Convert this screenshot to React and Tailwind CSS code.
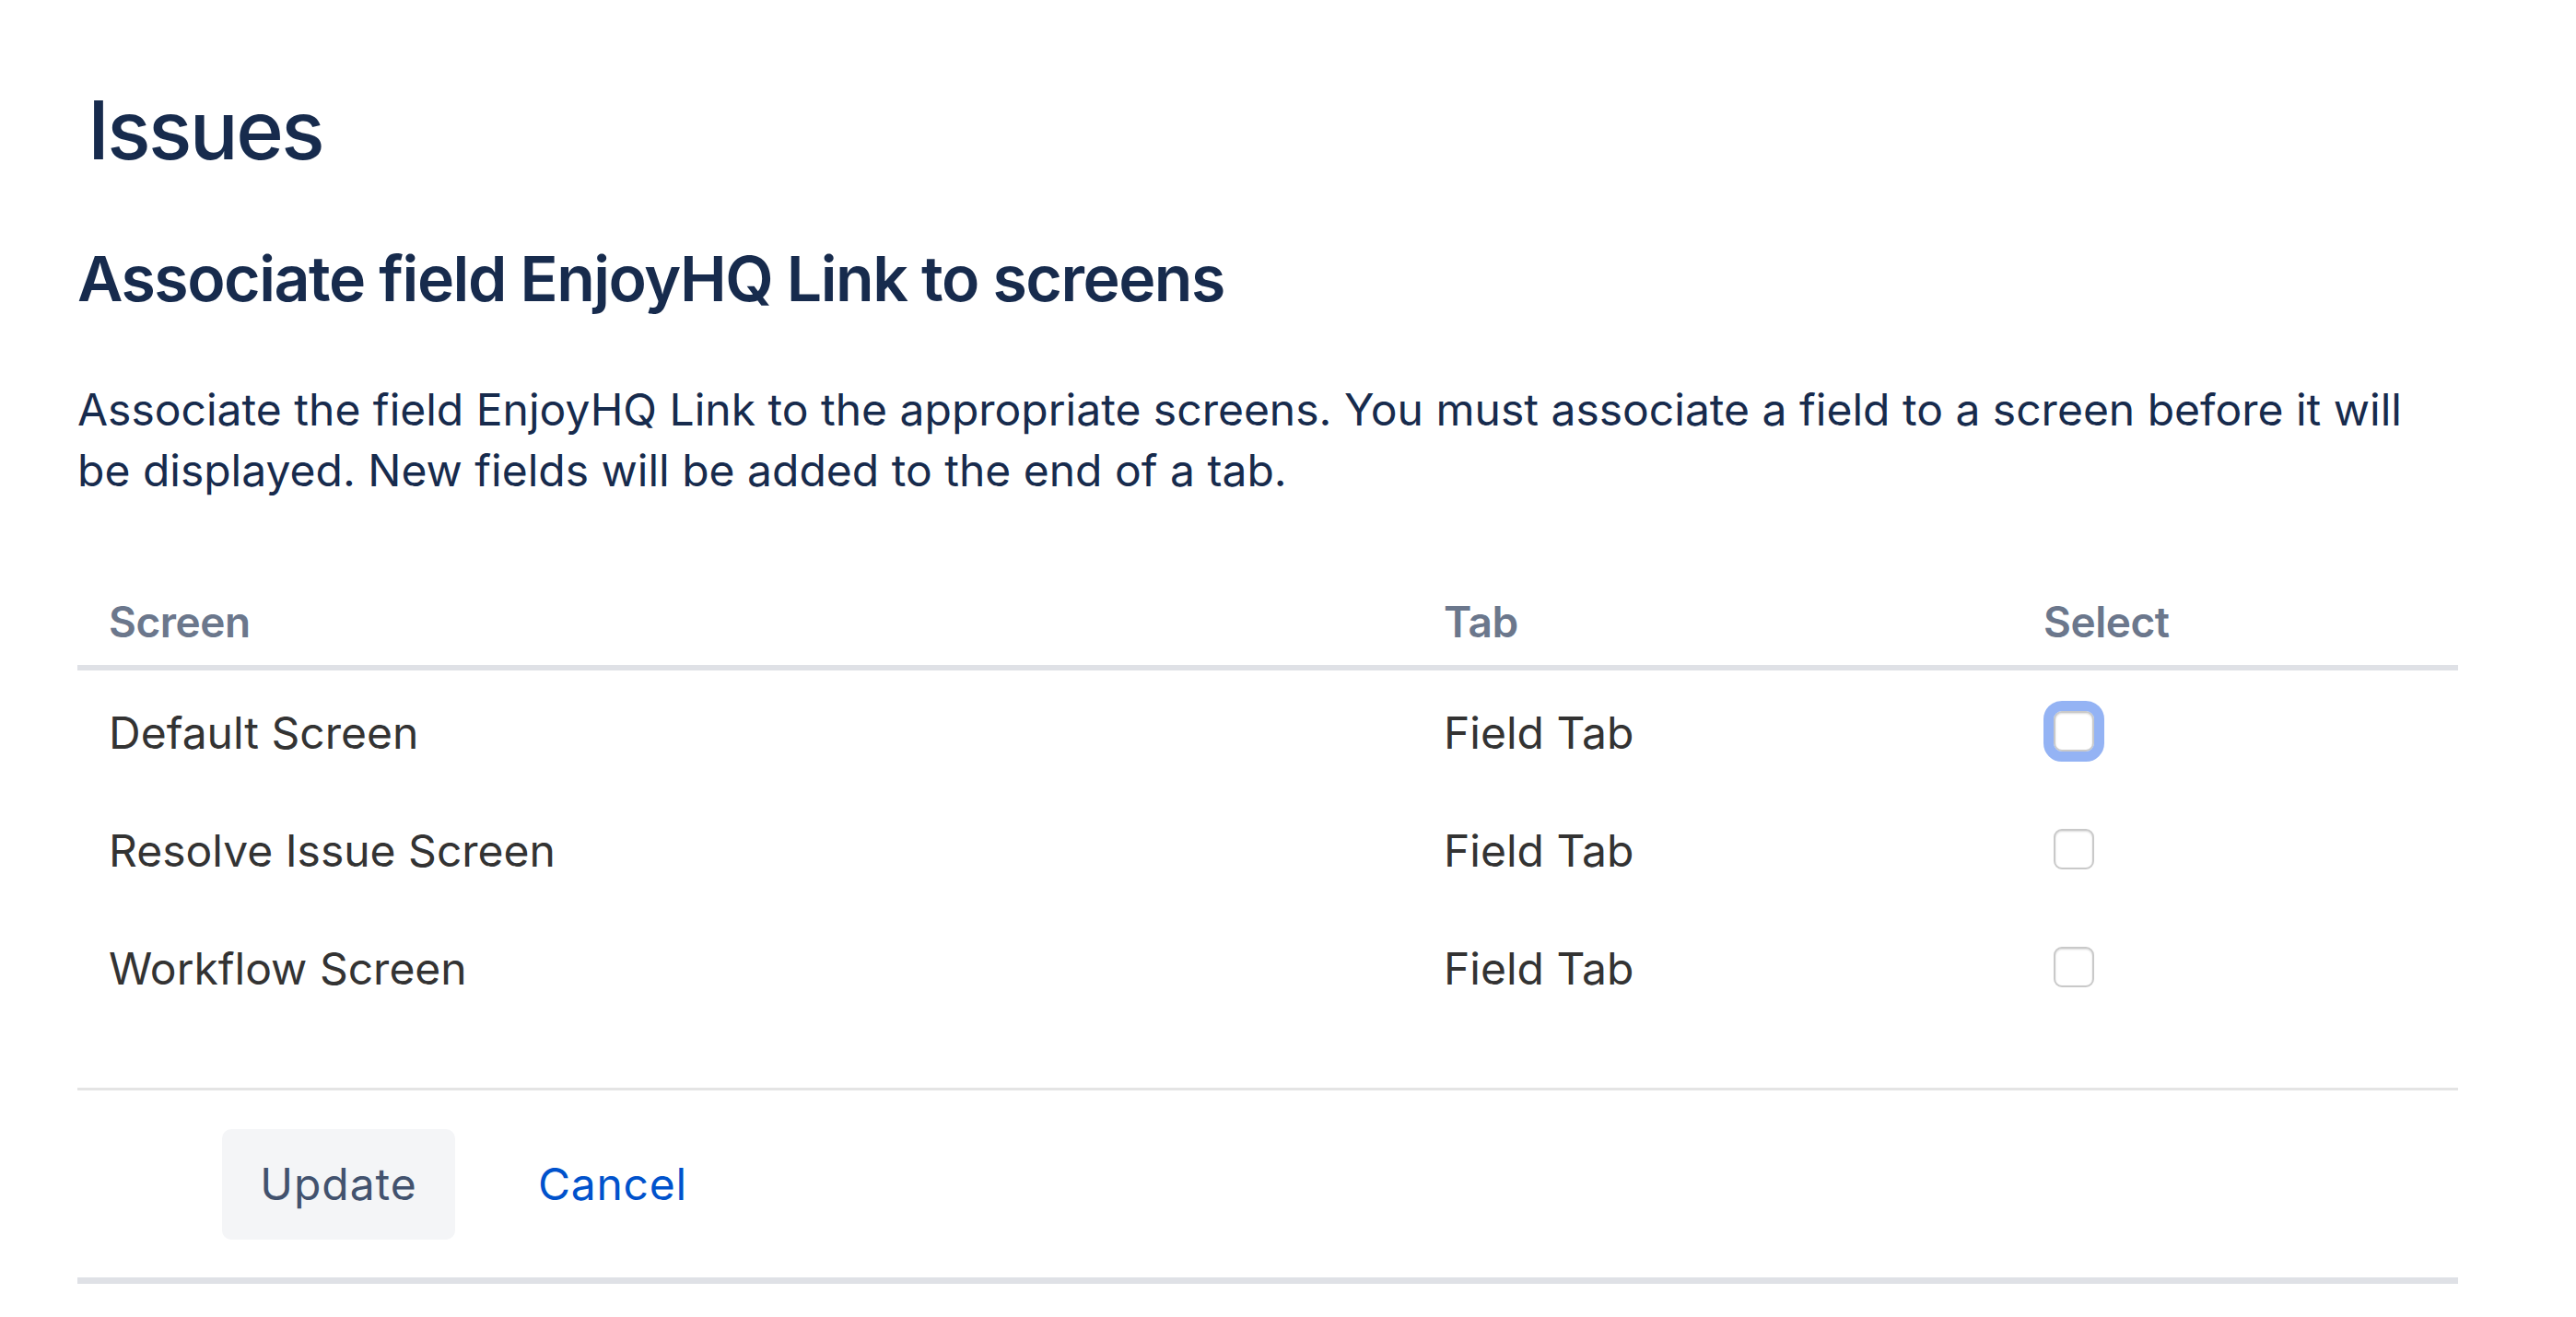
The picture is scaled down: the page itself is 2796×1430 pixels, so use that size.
import React from 'react'

const rows = [
  { id: 1, screen: 'Default Screen', tab: 'Field Tab', focused: true },
  { id: 2, screen: 'Resolve Issue Screen', tab: 'Field Tab', focused: false },
  { id: 3, screen: 'Workflow Screen', tab: 'Field Tab', focused: false },
]

const App = () => {
  return (
    <div className="min-h-[1430px] w-full bg-white font-['Inter','Liberation_Sans',sans-serif] text-[#172B4D]">
      <div className="w-[2668px] pl-[84px]">
        {/* Page header */}
        <h1 className="ml-[11px] pt-[97px] text-[88px] font-medium leading-[88px] tracking-[-0.03em]">Issues</h1>

        {/* Form title + description */}
        <h2 className="mt-[83px] text-[68px] font-semibold leading-[68px] tracking-[-0.022em]">
          Associate field EnjoyHQ Link to screens
        </h2>
        <p className="mt-[76px] text-[48px] leading-[66px]">
          Associate the field EnjoyHQ Link to the appropriate screens. You must associate a field to a screen before it will be displayed. New fields will be added to the end of a tab.
        </p>

        {/* Screens table */}
        <div className="mt-[108px]">
          <div className="grid grid-cols-[1449px_653px_1fr] border-b-[6px] border-[#DFE1E6] pb-[24px] text-[46px] font-semibold leading-[46px] tracking-[-0.01em] text-[#6B778C]">
            <div className="pl-[34px]">Screen</div>
            <div className="pl-[34px]">Tab</div>
            <div className="pl-[32px]">Select</div>
          </div>
          <div className="pt-[4px] pb-[65px]">
            {rows.map((row) => (
              <div
                key={row.id}
                className="grid h-[128px] grid-cols-[1449px_653px_1fr] items-center text-[48px] leading-[48px] text-[#333333]"
              >
                <div className="pl-[34px]">{row.screen}</div>
                <div className="pl-[34px]">{row.tab}</div>
                <div className="flex pl-[43px]">
                  <input
                    type="checkbox"
                    defaultChecked={false}
                    className={`-mt-[4px] h-[44px] w-[44px] appearance-none rounded-[9px] border-[2px] border-[#C9C9C9] bg-white shadow-[inset_0_1px_2px_rgba(0,0,0,0.15)] ${
                      row.focused ? 'outline-[11px] outline-solid outline-[#94B3F4]' : ''
                    }`}
                  />
                </div>
              </div>
            ))}
          </div>
        </div>

        {/* Actions */}
        <div className="flex items-center border-t-[3px] border-b-[7px] border-t-[#E4E4E4] border-b-[#DFE1E6] pt-[42px] pb-[41px] pl-[157px]">
          <button className="h-[120px] w-[253px] rounded-[10px] bg-[#F4F5F7] text-[48px] tracking-[0.02em] text-[#42526E]">
            Update
          </button>
          <a className="ml-[90px] text-[48px] tracking-[0.015em] text-[#0052CC]">Cancel</a>
        </div>
      </div>
    </div>
  )
}

export default App
